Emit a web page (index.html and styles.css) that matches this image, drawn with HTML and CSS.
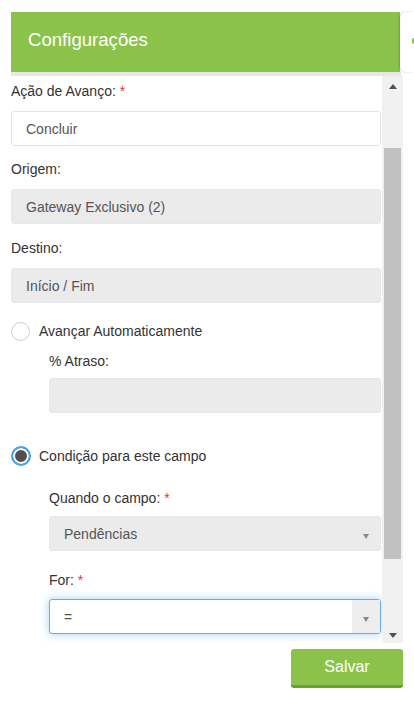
FILE: index.html
```html
<!DOCTYPE html>
<html lang="pt-BR">
<head>
<meta charset="utf-8">
<title>Configurações</title>
<link rel="stylesheet" href="styles.css">
</head>
<body>
<div class="app">
  <div class="head-row">
    <div class="panel-header"><h1 class="title">Configurações</h1></div>
    <div class="side-tab"><span class="side-dot"></span></div>
  </div>
  <div class="panel">
    <div class="header-rule"></div>
    <div class="scroll-box">
      <div class="form">
        <div class="field f1">
          <label class="label">Ação de Avanço: <span class="req">*</span></label>
          <div class="input">Concluir</div>
        </div>
        <div class="field f2">
          <label class="label">Origem:</label>
          <div class="input disabled">Gateway Exclusivo (2)</div>
        </div>
        <div class="field f3">
          <label class="label">Destino:</label>
          <div class="input disabled">Início / Fim</div>
        </div>
        <div class="radio-row r1">
          <span class="radio"></span>
          <span class="radio-text">Avançar Automaticamente</span>
        </div>
        <div class="sub s-atraso">
          <label class="label sub-label l7">% Atraso:</label>
          <div class="input disabled"></div>
        </div>
        <div class="radio-row r2">
          <span class="radio checked"></span>
          <span class="radio-text">Condição para este campo</span>
        </div>
        <div class="sub s-quando">
          <label class="label sub-label l8">Quando o campo: <span class="req">*</span></label>
          <div class="input select disabled">
            <span class="select-text">Pendências</span>
            <span class="select-btn"><span class="caret"></span></span>
          </div>
        </div>
        <div class="sub s-for">
          <label class="label sub-label l9">For: <span class="req">*</span></label>
          <div class="input select focused">
            <span class="select-text">=</span>
            <span class="select-btn shaded"><span class="caret"></span></span>
          </div>
        </div>
      </div>
      <div class="scrollbar">
        <div class="sb-btn"><span class="sb-up"></span></div>
        <div class="sb-track"><div class="sb-thumb"></div></div>
        <div class="sb-btn"><span class="sb-down"></span></div>
      </div>
    </div>
    <div class="footer"><button class="btn-save" type="button">Salvar</button></div>
  </div>
</div>
</body>
</html>
```
FILE: styles.css
```css
html, body {
  margin: 0;
  padding: 0;
  overflow: hidden;
  background: #fff;
  font-family: "Liberation Sans", Arial, sans-serif;
}

.app {
  padding: 12px 0 0 11px;
  width: 403px;
}

.head-row {
  display: flex;
}

.panel-header {
  width: 389px;
  height: 60px;
  background: #8bc34a;
  display: flex;
  align-items: center;
  padding: 0 0 4px 17px;
  box-sizing: border-box;
}

.title {
  margin: 0;
  font-size: 18.6px;
  font-weight: normal;
  color: #fff;
  line-height: 22px;
}

.side-tab {
  width: 14px;
  height: 60px;
  background: #fff;
  border-radius: 6px 0 0 6px;
  box-shadow: -1px 0 2px rgba(0, 0, 0, 0.2);
  display: flex;
  align-items: center;
  padding-bottom: 3px;
  box-sizing: border-box;
}

.side-dot {
  margin-left: 12px;
  width: 2px;
  height: 6px;
  border-radius: 3px 0 0 3px;
  background: #8bc34a;
}

.panel {
  width: 392px;
}

.header-rule {
  width: 390px;
  height: 4px;
  background: #e7e7e7;
}

.scroll-box {
  display: flex;
  height: 567px;
}

.form {
  flex: 1;
  overflow: hidden;
  padding: 5px 1px 0 0;
}

.field { margin-bottom: 13px; }
.f2 { margin-bottom: 14px; }
.f3 { margin-bottom: 18px; }

.label {
  display: block;
  font-size: 14px;
  line-height: 20px;
  color: #333;
  margin-bottom: 10px;
}

.req { color: #e8303a; }

.input {
  height: 35px;
  box-sizing: border-box;
  border: 1px solid #dfe4e9;
  border-radius: 3px;
  background: #fff;
  padding: 0 0 0 14px;
  display: flex;
  align-items: center;
  font-size: 14px;
  color: #555;
}

.input.disabled {
  background: #ebebeb;
  border-color: #e5e7ea;
}

.radio-row {
  display: flex;
  align-items: center;
  height: 20px;
  font-size: 14px;
  color: #333;
}

.radio {
  width: 19px;
  height: 19px;
  box-sizing: border-box;
  border: 1px solid #cfcfcf;
  border-radius: 50%;
  background: #fff;
  margin-right: 9px;
}

.radio.checked {
  width: 20px;
  height: 20px;
  border: 2px solid #3fa6ea;
  background: #505050;
  box-shadow: inset 0 0 0 2px #fff;
  margin-right: 8px;
}

.r2 { margin-top: 33px; }

.sub { padding-left: 38px; }
.s-atraso { margin-top: 10px; }
.s-quando { margin-top: 22px; }
.s-for { margin-top: 19px; }

.l7 { margin-bottom: 7px; }
.l8 { margin-bottom: 8px; }
.l9 { margin-bottom: 9px; }

.select { padding-right: 0; }

.select-text { flex: 1; }

.select-btn {
  width: 28px;
  align-self: stretch;
  display: flex;
  align-items: center;
  justify-content: center;
  padding-top: 6px;
  box-sizing: border-box;
}

.select-btn.shaded {
  background: #eee;
}

.caret {
  width: 0;
  height: 0;
  border-left: 3.5px solid transparent;
  border-right: 3.5px solid transparent;
  border-top: 5px solid #8a8a8a;
}

.input.focused {
  border-color: #66afe9;
  box-shadow: 0 0 8px rgba(102, 175, 233, 0.6);
}

.scrollbar {
  width: 21px;
  background: #f1f1f1;
  display: flex;
  flex-direction: column;
}

.sb-btn {
  height: 17px;
  display: flex;
  align-items: center;
  justify-content: center;
}

.sb-up {
  width: 0;
  height: 0;
  border-left: 4.5px solid transparent;
  border-right: 4.5px solid transparent;
  border-bottom: 5px solid #505050;
  margin-top: 3px;
}

.sb-down {
  width: 0;
  height: 0;
  border-left: 4.5px solid transparent;
  border-right: 4.5px solid transparent;
  border-top: 5px solid #505050;
  margin-top: 2px;
}

.sb-track {
  flex: 1;
  padding: 55px 2px 0;
}

.sb-thumb {
  height: 411px;
  background: #c1c1c1;
}

.footer {
  display: flex;
  justify-content: flex-end;
  padding-top: 6px;
}

.btn-save {
  width: 112px;
  height: 39px;
  border: none;
  border-bottom: 3px solid #6b9e35;
  border-radius: 3px;
  background: #8bc34a;
  color: #fff;
  font-family: "Liberation Sans", Arial, sans-serif;
  font-size: 16px;
  padding: 0;
}
```
